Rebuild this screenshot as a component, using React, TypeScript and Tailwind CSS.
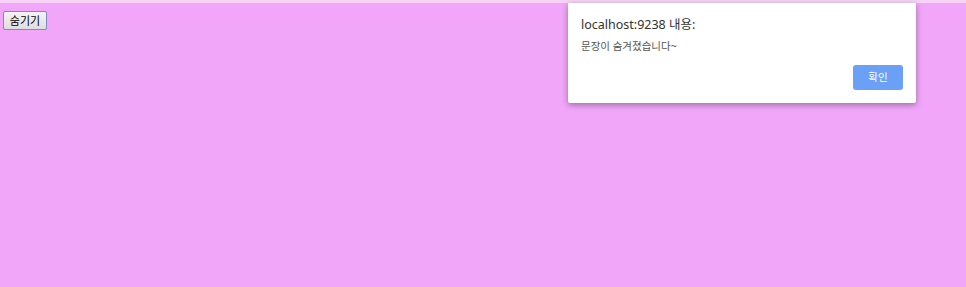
export default function App() {
  return (
    <div className="relative w-[966px] h-[287px] bg-[#f1a6f9] overflow-hidden" style={{ fontFamily: '"Noto Sans", "Noto Sans CJK KR", sans-serif' }}>
      <div className="h-[3px] bg-[#f6d3f7]" />
      <div className="flex pl-[3px] pt-[8px]">
        <button className="flex items-center justify-center w-[44px] h-[19px] text-[11px] leading-none text-black bg-gradient-to-b from-[#f4f4f4] to-[#dedede] border border-[#7a8bbf] rounded-[2px]">숨기기</button>
      </div>
      <div className="absolute left-[568px] top-[3px] w-[348px] h-[100px] bg-white rounded-b-[2px] shadow-[0_2px_6px_rgba(0,0,0,0.35)] px-[13px] pt-[14px]">
        <div className="text-[12.5px] leading-[16px] text-[#333]">localhost:9238 내용:</div>
        <div className="mt-[6px] text-[10.5px] leading-[14px] text-[#555]">문장이 숨겨졌습니다~</div>
        <div className="flex justify-end mt-[12px]">
          <div className="w-[50px] h-[25px] rounded-[3px] bg-[#6aa1f6] text-white text-[10.5px] flex items-center justify-center">확인</div>
        </div>
      </div>
    </div>
  );
}
